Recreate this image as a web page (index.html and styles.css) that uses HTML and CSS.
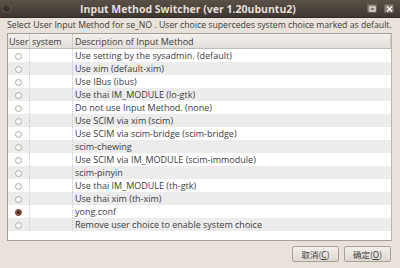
FILE: index.html
```html
<!DOCTYPE html>
<html lang="en">
<head>
  <meta charset="UTF-8">
  <title>Input Method Switcher</title>
  <link rel="stylesheet" href="styles.css">
</head>
<body>

  <div class="window">
    <div class="titlebar">
      <span class="menu-dot"></span>
      <span class="title">Input Method Switcher (ver 1.20ubuntu2)</span>
      <div class="win-buttons">
        <span class="win-btn">
          <svg width="7" height="6" viewBox="0 0 7 6"><rect x="1" y="1" width="5" height="4" fill="none" stroke="#fff" stroke-width="1"/></svg>
        </span>
        <span class="win-btn">
          <svg width="7" height="6" viewBox="0 0 7 6"><path d="M1 0.5 L6 5.5 M6 0.5 L1 5.5" stroke="#fff" stroke-width="1.3"/></svg>
        </span>
      </div>
    </div>

    <div class="content">
      <p class="prompt">Select User Input Method for se_NO . User choice supercedes system choice marked as default.</p>

      <div class="tree">
        <table class="im-table">
          <thead>
            <tr>
              <th class="col-user">User</th>
              <th class="col-system">system</th>
              <th class="col-desc">Description of Input Method</th>
            </tr>
          </thead>
          <tbody>
            <tr><td class="col-user"><span class="radio"></span></td><td class="col-system"></td><td>Use setting by the sysadmin. (default)</td></tr>
            <tr><td class="col-user"><span class="radio"></span></td><td class="col-system"></td><td>Use xim (default-xim)</td></tr>
            <tr><td class="col-user"><span class="radio"></span></td><td class="col-system"></td><td>Use IBus (ibus)</td></tr>
            <tr><td class="col-user"><span class="radio"></span></td><td class="col-system"></td><td>Use thai IM_MODULE (lo-gtk)</td></tr>
            <tr><td class="col-user"><span class="radio"></span></td><td class="col-system"></td><td>Do not use Input Method. (none)</td></tr>
            <tr><td class="col-user"><span class="radio"></span></td><td class="col-system"></td><td>Use SCIM via xim (scim)</td></tr>
            <tr><td class="col-user"><span class="radio"></span></td><td class="col-system"></td><td>Use SCIM via scim-bridge (scim-bridge)</td></tr>
            <tr><td class="col-user"><span class="radio"></span></td><td class="col-system"></td><td>scim-chewing</td></tr>
            <tr><td class="col-user"><span class="radio"></span></td><td class="col-system"></td><td>Use SCIM via IM_MODULE (scim-immodule)</td></tr>
            <tr><td class="col-user"><span class="radio"></span></td><td class="col-system"></td><td>scim-pinyin</td></tr>
            <tr><td class="col-user"><span class="radio"></span></td><td class="col-system"></td><td>Use thai IM_MODULE (th-gtk)</td></tr>
            <tr><td class="col-user"><span class="radio"></span></td><td class="col-system"></td><td>Use thai xim (th-xim)</td></tr>
            <tr><td class="col-user"><span class="radio checked"></span></td><td class="col-system"></td><td>yong.conf</td></tr>
            <tr><td class="col-user"><span class="radio"></span></td><td class="col-system"></td><td>Remove user choice to enable system choice</td></tr>
          </tbody>
        </table>
      </div>

      <div class="actions">
        <button type="button">取消(<u>C</u>)</button>
        <button type="button">确定(<u>O</u>)</button>
      </div>
    </div>
  </div>

</body>
</html>
```

FILE: styles.css
```css
html, body {
  margin: 0;
  padding: 0;
}

body {
  font-family: 'Open Sans', 'Noto Sans CJK SC', sans-serif;
  font-size: 9px;
  color: #3c3c3c;
  background: #e8e2da;
}

.window {
  width: 400px;
  height: 268px;
  background: #e8e2da;
  overflow: hidden;
}

.titlebar {
  height: 17px;
  background: linear-gradient(#5a5047, #3e3731);
  display: flex;
  align-items: center;
  border-bottom: 1px solid #2f2a25;
}

.menu-dot {
  width: 7px;
  height: 7px;
  border-radius: 50%;
  background: #3a332d;
  border: 1px solid #655b51;
  margin-left: 2px;
}

.title {
  flex: 1;
  text-align: center;
  color: #e4dfd7;
  font-weight: bold;
  font-size: 10.5px;
  margin-right: 2px;
}

.win-buttons {
  display: flex;
  gap: 7px;
  margin-right: 6px;
}

.win-btn {
  width: 8px;
  height: 7px;
  background: #887e73;
  border: 1px solid #6d645a;
  border-radius: 1px;
  display: flex;
  align-items: center;
  justify-content: center;
}

.content {
  padding: 0 8px 0 7px;
}

.prompt {
  margin: 0;
  height: 15px;
  line-height: 15px;
  font-size: 8.7px;
  white-space: nowrap;
}

.tree {
  height: 206px;
  background: #fff;
  border: 1px solid #a69e95;
  border-right-color: #bdb5ac;
  overflow: hidden;
}

.im-table {
  width: 100%;
  border-collapse: collapse;
  table-layout: fixed;
}

.im-table th {
  height: 14px;
  padding: 0 0 0 2px;
  text-align: left;
  font-weight: normal;
  color: #3c3c3c;
  background: linear-gradient(#f3f1ee, #e2ded9);
  border-bottom: 1px solid #c4bdb5;
  border-right: 1px solid #d2ccc5;
  white-space: nowrap;
}

.im-table td {
  height: 13px;
  padding: 0 0 0 2px;
  white-space: nowrap;
}

.im-table .col-user {
  width: 20px;
  text-align: center;
  padding: 0;
}

.im-table th.col-user {
  text-align: left;
  padding-left: 1px;
}

.im-table .col-system {
  width: 40px;
}

.im-table td.col-user,
.im-table td.col-system {
  border-right: 1px dotted #c8c8c8;
}

.im-table tbody tr:nth-child(even) {
  background: #ececec;
}

.radio {
  display: inline-block;
  width: 5px;
  height: 5px;
  border: 1px solid #b0aaa4;
  border-radius: 50%;
  background: #fbfaf9;
  vertical-align: middle;
}

.radio.checked {
  border-color: #6a3a2c;
  background: radial-gradient(circle, #2a1a14 0 1.2px, #9a5a46 1.6px);
}

.actions {
  display: flex;
  justify-content: flex-end;
  gap: 5px;
  margin-top: 5px;
  padding-right: 1px;
}

.actions button {
  width: 47px;
  height: 16px;
  padding: 0;
  font-family: 'Noto Sans CJK SC', 'Open Sans', sans-serif;
  font-size: 8.5px;
  color: #3c3c3c;
  background: linear-gradient(#f3f0ec, #ddd7d0);
  border: 1px solid #a9a095;
  border-radius: 2px;
}
```
